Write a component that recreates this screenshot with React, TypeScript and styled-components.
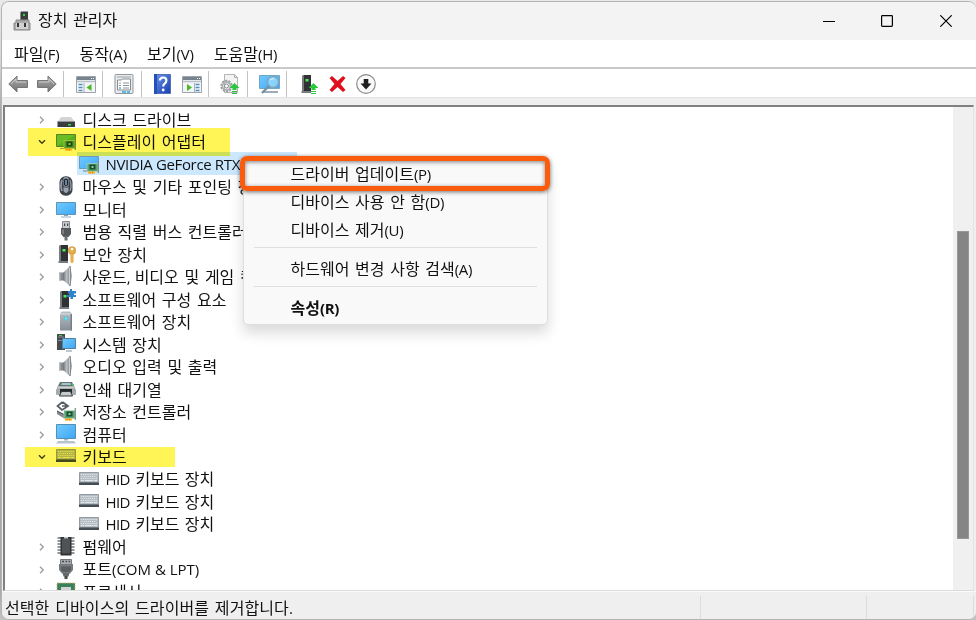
import React from 'react';
import styled, { createGlobalStyle } from 'styled-components';

const GlobalStyle = createGlobalStyle`
  html, body { margin: 0; padding: 0; background: #dedede; overflow: hidden; }
  * { box-sizing: border-box; }
  svg { display: block; flex: none; }
`;

/* ---------- window frame ---------- */

const Desktop = styled.div`
  width: 976px;
  height: 620px;
  padding: 1px 0 0 1px;
  background: linear-gradient(#e9e9e9 0, #d6d6d6 60px, #a8a8a8 110px, #a8a8a8 590px, #c4c4c4);
  overflow: hidden;
`;

const Window = styled.div`
  position: relative;
  width: 975px;
  height: 619px;
  display: flex;
  flex-direction: column;
  border: 1px solid #b4b4b4;
  border-right: 0;
  border-radius: 8px;
  background: #efefef;
  overflow: hidden;
  color: #111;
  font-family: 'Noto Sans CJK KR', sans-serif;
  font-size: 16px;
  line-height: 22px;
`;

const TitleBar = styled.header`
  flex: none;
  height: 38px;
  display: flex;
  align-items: center;
  padding: 0 1px 0 11px;
  background: #f3f3f3;
`;

const Title = styled.div`
  flex: 1;
  padding-left: 7px;
  margin-top: -4px;
`;

const CaptionButton = styled.button`
  width: 58.5px;
  height: 38px;
  padding: 0;
  border: 0;
  display: grid;
  place-items: center;
  background: transparent;
`;

const CaptionButtons = styled.div`
  display: flex;
`;

const MenuBar = styled.nav`
  flex: none;
  height: 27px;
  display: flex;
  align-items: center;
  padding: 0 0 0 12px;
  gap: 20px;
  background: #fff;
`;

const Toolbar = styled.div`
  flex: none;
  height: 31px;
  display: flex;
  align-items: center;
  padding: 2px 0 0 6px;
  background: #fff;
  border-top: 2px solid #c9c9c9;
  border-bottom: 1px solid #e3e3e3;
`;

const Tool = styled.span<{ $gap?: number }>`
  margin-left: ${(p) => p.$gap ?? 0}px;
`;

const ToolDivider = styled.i<{ $gap: number }>`
  width: 1px;
  height: 26px;
  margin-left: ${(p) => p.$gap}px;
  background: #c3c3c3;
`;

const Client = styled.main`
  flex: none;
  height: 486px;
  margin: 7px 2px 0 1px;
  display: flex;
  border-top: 2px solid #808080;
  border-left: 2px solid #808080;
  border-bottom: 1px solid #dcdcdc;
  border-right: 1px solid #e3e3e3;
  background: #fff;
  overflow: hidden;
`;

const Tree = styled.ul`
  flex: 1;
  margin: 0;
  padding: 0.4px 0 0;
  list-style: none;
  overflow: hidden;
`;

const ScrollTrack = styled.div`
  width: 20px;
  padding: 124px 4px 0;
  background: #f0f0f0;
`;

const ScrollThumb = styled.div`
  height: 308px;
  background: #858585;
  border: 1px solid #979797;
`;

const StatusBar = styled.footer`
  flex: 1;
  display: flex;
  align-items: stretch;
  padding-top: 4px;
  border-top: 1px solid #fafafa;
  background: #efefef;
`;

const StatusCell = styled.div<{ $width: number }>`
  width: ${(p) => p.$width}px;
  padding-left: 3px;
  border-right: 1px solid #dcdcdc;
  letter-spacing: 0.09px;
  white-space: nowrap;
`;

/* ---------- tree ---------- */

const Row = styled.li`
  height: 22.53px;
  display: flex;
  align-items: center;
  white-space: nowrap;
`;

const Caret = styled.span`
  width: 12px;
  margin-left: 31px;
  padding-top: 2px;
  display: grid;
  place-items: center;
`;

const IconSlot = styled.span`
  margin-left: 8px;
`;

const Caption = styled.span`
  margin-left: 6.5px;
`;

const Leaf = styled.div<{ $selected?: boolean }>`
  height: 22.5px;
  width: ${(p) => (p.$selected ? '220px' : 'auto')};
  margin-left: 72px;
  padding-left: 2px;
  display: flex;
  align-items: center;
  letter-spacing: -0.1px;
  background: ${(p) => (p.$selected ? '#cce8ff' : 'transparent')};
`;

const Marker = styled.div<{ $x: number; $y: number; $w: number; $h: number }>`
  position: absolute;
  left: ${(p) => p.$x}px;
  top: ${(p) => p.$y}px;
  width: ${(p) => p.$w}px;
  height: ${(p) => p.$h}px;
  background: #fff557;
  mix-blend-mode: multiply;
`;

/* ---------- context menu ---------- */

const Popup = styled.div`
  position: absolute;
  left: 241px;
  top: 154px;
  width: 305px;
  height: 169px;
  padding: 3px 10px;
  border: 1px solid #dedede;
  border-radius: 5px;
  background: #f9f9f9;
  box-shadow: 0 8px 14px rgba(0, 0, 0, 0.15);
`;

const PopupItem = styled.div<{ $bold?: boolean }>`
  height: 28px;
  display: flex;
  align-items: center;
  padding: 0 0 2px 36.5px;
  font-weight: ${(p) => (p.$bold ? 700 : 400)};
  white-space: nowrap;
`;

const PopupRule = styled.div`
  height: 1px;
  margin: 3px 0 7px;
  background: #dfdfdf;
`;

const Callout = styled.div`
  position: absolute;
  left: 238px;
  top: 154px;
  width: 310px;
  height: 35px;
  border: 5px solid #fa5b0c;
  border-radius: 7px;
  box-shadow: 0 1px 4px rgba(0, 0, 0, 0.55), inset 0 1px 4px rgba(0, 0, 0, 0.5);
`;

/* ---------- text ---------- */

const Latin = styled.span<{ $size: number; $tight: number }>`
  font-family: 'Open Sans', sans-serif;
  font-size: ${(p) => p.$size}px;
  letter-spacing: ${(p) => p.$tight}px;
  white-space: pre;
`;

const Hangul = styled.span`
  white-space: pre;
  word-spacing: 2.1px;
`;

function Text({ children, size = 15, tight = -0.35 }: { children: string; size?: number; tight?: number }) {
  const runs = children.split(/([!-~]+(?: [!-~]+)*)/).filter(Boolean);
  return (
    <span>
      {runs.map((r, i) =>
        /[!-~]/.test(r) ? <Latin key={i} $size={size} $tight={tight}>{r}</Latin> : <Hangul key={i}>{r}</Hangul>
      )}
    </span>
  );
}

/* ---------- icons ---------- */

const Svg = ({ w = 20, h = 20, children }: { w?: number; h?: number; children: React.ReactNode }) => (
  <svg width={w} height={h} viewBox={`0 0 ${w} ${h}`} fill="none">{children}</svg>
);

const HiddenDefs = styled.svg`
  position: absolute;
`;

const Gradients = () => (
  <HiddenDefs width="0" height="0">
    <defs>
      <linearGradient id="screen" x1="0" y1="0" x2="1" y2="1">
        <stop offset="0" stopColor="#6fcbff" /><stop offset=".5" stopColor="#58b9fa" /><stop offset="1" stopColor="#3fa6f5" />
      </linearGradient>
      <linearGradient id="steel" x1="0" y1="0" x2="1" y2="0">
        <stop offset="0" stopColor="#6b7277" /><stop offset=".5" stopColor="#b9bec2" /><stop offset="1" stopColor="#858c91" />
      </linearGradient>
      <linearGradient id="silver" x1="0" y1="0" x2="0" y2="1">
        <stop offset="0" stopColor="#b9c0c6" /><stop offset="1" stopColor="#868e96" />
      </linearGradient>
      <linearGradient id="arrow" x1="0" y1="0" x2="0" y2="1">
        <stop offset="0" stopColor="#b0b0b0" /><stop offset="1" stopColor="#6f6f6f" />
      </linearGradient>
      <linearGradient id="help" x1="0" y1="0" x2="1" y2="1">
        <stop offset="0" stopColor="#6d94ee" /><stop offset="1" stopColor="#153fac" />
      </linearGradient>
    </defs>
  </HiddenDefs>
);

const Card = () => (
  <>
    <path d="M8 9.500h11v8H8z" fill="#55a573" stroke="#c5dccb" strokeWidth=".6" />
    <path d="M19.300 7v12" stroke="#7f8b83" strokeWidth="1.200" />
    <path d="M10.500 10.500h6v5h-6z" fill="#1b4f34" /><path d="M12.500 12h2v2h-2z" fill="#8fd09a" />
    <path d="M9 17.500h7v2H9z" fill="#ffae19" /><path d="M11 17.500v2m2.500-2v2" stroke="#e57d0a" strokeWidth=".8" />
  </>
);

const Tower = () => (
  <>
    <path d="M3 2l2-1h7v17H3z" fill="#303236" /><path d="M3 2l2-1v16l-2 1z" fill="#777b80" />
    <path d="M6.500 5h3v2.500h-3z" fill="#4aef50" /><path d="M2.500 17h9.500v2H2.500z" fill="#777c81" />
  </>
);

const GreenUp = () => <path d="M14.500 9l5 5h-3v2h-4v-2h-3zM12 17h5v1h-5zm0 2h5v1h-5z" fill="#2bc73d" />;

const icons: Record<string, React.ReactNode> = {
  disk: <Svg><path d="M5 8h10l4 5H1.500z" fill="#d2d4d5" /><path d="M1.500 12.500h17.500v5.500H1.500z" fill="#3a3d40" /><path d="M1.500 12.500h17.500" stroke="#909497" /><path d="M12 15h3v1.500h-3z" fill="#35df43" /></Svg>,
  display: <Svg><path d="M.5 3.500h19v12H.5z" fill="#54b75c" stroke="#5b8360" /><path d="M1 15V4h18z" fill="#7bcf72" fillOpacity=".55" /><path d="M4 17.500h5" stroke="#9bac9c" /><Card /></Svg>,
  gpu: <Svg><path d="M.5 2.500h19v12H.5z" fill="url(#screen)" stroke="#6d9bb8" /><path d="M4 17h5" stroke="#8ba2b3" strokeWidth="1.500" /><Card /></Svg>,
  mouse: <Svg><rect x="3.500" y=".2" width="13" height="19.600" rx="6" fill="#3d424b" /><path d="M6 4q-2 6 0 11" stroke="#98a1ac" strokeWidth="1.600" /><path d="M14 4q2 6 0 11" stroke="#8c95a0" strokeWidth="1.300" /><path d="M7.500 2q2.500-2 5 0v13q-2.500 4-5 0z" fill="#9ba4b0" /><path d="M7 10.500q3 1.500 6 0" stroke="#454b54" /><rect x="8" y="2.500" width="4" height="7.500" rx="1.800" fill="#20262e" /><path d="M10 4v5" stroke="#8fc9ee" strokeWidth="1.200" /></Svg>,
  monitor: <Svg><path d="M.5 3.500h19v12H.5z" fill="url(#screen)" stroke="#5e94b8" /><path d="M8 16h4v1H8z" fill="#90a4b4" /><path d="M5 18h10" stroke="#8fb2c9" strokeWidth="1.200" /></Svg>,
  usb: <Svg><path d="M6.500.500h7v8h-7z" fill="#c9cbce" stroke="#83868a" /><path d="M8 2.500h1.200v2.500H8zm3 0h1.200v2.500H11z" fill="#444" /><path d="M5 7h10v6l-2.500 3h-5L5 13z" fill="#55585d" /><path d="M7 8.500v4.500" stroke="#a2a4a8" /><path d="M8.500 15h3v4.500h-3z" fill="#6c6f73" /></Svg>,
  security: <Svg><Tower /><circle cx="16" cy="6.500" r="3.900" fill="#e4ae4b" stroke="#b98a36" strokeWidth=".5" /><circle cx="16" cy="5" r="1.300" fill="#fff" /><path d="M14.500 9.500h3v8l-1.500 2-1.500-2z" fill="#d99f38" /><path d="M16 10v8" stroke="#f6d081" strokeWidth=".8" /></Svg>,
  speaker: <Svg><path d="M3 6.500h5v8H3z" fill="#858b90" /><path d="M3 6.500h1.500v8H3z" fill="#b7bbbe" /><path d="M7 7l7-7v20l-7-6z" fill="url(#steel)" /><path d="M14 0q2.500 10 0 20z" fill="#9ba0a4" stroke="#777d81" strokeWidth=".8" /><path d="M13.500 1.500v17" stroke="#cdd1d4" /></Svg>,
  component: <Svg><g transform="translate(1 1)"><Tower /></g><path d="M12 2h2V0h2v2h4v2.500h-2V6h2v2h-3v2h-2.500V8H11V6h2V4.500h-1z" fill="#2f83c9" /></Svg>,
  software: <Svg><path d="M4 2.500L6 .5h8l2 2v17H4z" fill="url(#silver)" /><path d="M4 3h12" stroke="#dce0e3" /><path d="M14.500 3v16.500H16V3z" fill="#757f88" /><circle cx="10" cy="7.500" r="2.200" fill="#6fb9c7" /><circle cx="10" cy="7.500" r="1.200" fill="#4df0ff" /></Svg>,
  system: <Svg><path d="M1 0h8v16H1z" fill="#464b50" /><path d="M2 3h6M2 6.500h5" stroke="#858b90" /><path d="M3 1h3v1H3z" fill="#46d04e" /><path d="M6.500 4.500h13v10h-13z" fill="url(#screen)" stroke="#50809f" /><path d="M10 17h6" stroke="#a7b6c2" strokeWidth="1.500" /></Svg>,
  printer: <Svg><path d="M4 3h12l3 6H1z" fill="#687174" /><path d="M6 4h8.500l.5 2H5z" fill="#9ec7c9" /><path d="M2 7h16l2 4v4q0 1-1 1H1q-1 0-1-1v-4z" fill="#a5aaad" /><path d="M1.500 8.500h17" stroke="#cbd0d2" strokeWidth="1.500" /><path d="M4 10h12v4H4z" fill="#25292c" /><path d="M5.500 12.500h9l2 4.500h-13z" fill="#c8cbcd" stroke="#363b3e" /><path d="M16 5h2v1.500h-2z" fill="#3cd654" /></Svg>,
  storage: <Svg><path d="M6.500 1l5.500 4-3 2M6.500 1L1.500 5 6 9l4-2.500M6 5h4" stroke="#555b61" strokeWidth="1.700" /><path d="M1 10l8 4v4l-8-5z" fill="#858b8f" /><path d="M1 10l8 4" stroke="#3f4447" /><Card /></Svg>,
  computer: <Svg><path d="M.5.500h19v14H.5z" fill="url(#screen)" stroke="#568fb4" /><path d="M8 15h4v1.500H8z" fill="#a6b5c1" /><path d="M2 17h16l2 2.500H0z" fill="#b7c3cd" /></Svg>,
  keyboard: <Svg><path d="M.5 3.500h19v10H.5z" fill="#b4bcc4" stroke="#939ca5" /><path d="M0 13.500h20V16H0z" fill="#444c54" /><path d="M2 5.500h16M2.500 7.500h15M2 9.500h16" stroke="#e5e9ec" strokeDasharray="1.200 .9" /><path d="M2 11.500h3m1 0h8m1 0h3" stroke="#e5e9ec" /></Svg>,
  firmware: <Svg><path d="M1.500 2h17M1.500 5h17M1.500 8h17M1.500 11h17M1.500 14h17M1.500 17h17" stroke="#707376" strokeWidth="1.700" /><path d="M4.500 1h11v18.500h-11z" fill="#303336" /><path d="M6 2.500h8v15H6z" fill="#505356" /><path d="M8 1h4v1.500H8z" fill="#c2c5c8" /></Svg>,
  port: <Svg><path d="M4.500.500h11v5h-11z" fill="#aaadb0" stroke="#74777a" /><path d="M6 2.500h2m1.500 0h1.500m1.500 0h1.500" stroke="#42464a" strokeWidth="1.300" /><path d="M3 5h14v6l-3 3.500H6L3 11z" fill="#777b7f" /><path d="M5 7.500h10v4L13 13H7l-2-1.500z" fill="#5a5f63" /><path d="M6.500 14h7l-1 3.500h-5z" fill="#65696d" /><path d="M8.500 17h3v3h-3z" fill="#45494c" /></Svg>,
  processor: <Svg><path d="M1 2h18v17H1z" fill="#3a8159" stroke="#cfb67b" strokeDasharray="1.500 1" /><path d="M5 6h10v10H5z" fill="#d1d4d2" /></Svg>,
};

const BackArrow = () => <Svg><path d="M.8 10L9 2v4.500h10.500v7H9V18z" fill="url(#arrow)" stroke="#777" /><path d="M3 10l5-5v3h10" stroke="#c9c9c9" /></Svg>;
const ForwardArrow = () => <Svg><path d="M19.200 10L11 2v4.500H.5v7H11V18z" fill="url(#arrow)" stroke="#777" /><path d="M17 10l-5-5v3H2" stroke="#c9c9c9" /></Svg>;

const Pane = ({ flip }: { flip?: boolean }) => (
  <Svg>
    <path d="M.5 2.500h19v16H.5z" fill="#f3f5f7" stroke="#9da4ac" />
    <path d="M1 3h18v3H1z" fill="#77828f" /><path d="M1 7.500h18" stroke="#b7bfc7" strokeWidth="1.500" />
    <path d="M15 4.500h1m1 0h1" stroke="#fff" />
    <g transform={flip ? 'translate(11 0)' : undefined}><path d="M2.500 10.500h4M2.500 13.500h4M2.500 16.500h4" stroke="#4f90bf" strokeWidth="1.500" /></g>
    <path d={flip ? 'M12.500 9v9' : 'M8 9v9'} stroke="#aab1b8" />
    <path d={flip ? 'M5 10l5 3.500L5 17z' : 'M15.500 10l-5 3.500 5 3.500z'} fill="#4bb729" />
  </Svg>
);

const Properties = () => <Svg><rect x="1" y=".5" width="18" height="19" rx="1" fill="#e9ebed" stroke="#91979d" /><path d="M3 2h14v2H3z" fill="#c2c7cc" /><path d="M3.500 6h4l1-1h8v11h-13z" fill="#fff" stroke="#858c94" /><path d="M5 9h2m2 0h6M5 11.500h2m2 0h6M5 14h2m2 0h6" stroke="#8d969f" /><path d="M5 14h2" stroke="#45a9e0" /><path d="M8 18h4m1 0h3" stroke="#28aae5" strokeWidth="1.500" /></Svg>;
const Help = () => <Svg w={17}><path d="M.5.5h16v19H.5z" fill="url(#help)" stroke="#5370b9" /><path d="M0 0h3v20H0z" fill="#2450b9" /><path d="M6 6.500q0-3 3.200-3t3.200 3q0 2-2 3.300-1.200.8-1.200 2.700" stroke="#fff" strokeWidth="2.200" /><circle cx="9.200" cy="16" r="1.400" fill="#fff" /></Svg>;
const UpdateFile = () => <Svg><path d="M4.500.500h10l3 3v15h-13z" fill="#f3f3f3" stroke="#b3b3b3" /><path d="M14.500.5v3h3" stroke="#aaa" /><circle cx="6.500" cy="12" r="5" stroke="#949a9e" strokeWidth="2.400" strokeDasharray="2 1.100" /><circle cx="6.500" cy="12" r="4" stroke="#aeb2b5" strokeWidth="1.800" /><circle cx="6.500" cy="12" r="2" fill="#fff" stroke="#858b90" /><GreenUp /></Svg>;
const Scan = () => <Svg w={21}><path d="M.5 1.500h20v13H.5z" fill="url(#screen)" stroke="#72a7c4" /><path d="M3 18h16" stroke="#9cacb8" strokeWidth="2" /><circle cx="14" cy="8" r="5.500" fill="#9bdcff" fillOpacity=".75" stroke="#82a3b7" strokeWidth="1.400" /><path d="M10 12l-7 7" stroke="#78909f" strokeWidth="2.400" /><path d="M11 6q2-2 4-1" stroke="#ddf4ff" /></Svg>;
const Driver = () => <Svg><g transform="translate(-1 0)"><Tower /></g><g transform="translate(-1 0)"><GreenUp /></g></Svg>;
const Remove = () => <Svg w={17} h={18}><path d="M3 1l5.500 5L14 1l2.500 2-5 6 5 6-2.500 2-5.500-5L3 17 .5 15l5-6-5-6z" fill="#df101b" /></Svg>;
const Disable = () => <Svg><circle cx="10" cy="10" r="9.300" fill="#fafafa" stroke="#8a8a8a" strokeWidth="1.200" /><path d="M7.700 5h4.600v4.500H15.500L10 15.500 4.500 9.500h3.200z" fill="#1e1e1e" /></Svg>;

const AppIcon = () => <Svg w={18} h={20}><path d="M8 .5h7v9H8z" fill="#3a3d40" /><path d="M7 1.500l1-1v9H7z" fill="#888" /><path d="M10 3h2v2h-2z" fill="#39d743" /><path d="M3 9h13v3h1v7H1v-7h2z" fill="#aaa" stroke="#898989" /><path d="M3 12h12v6H3z" fill="#d2d2d2" /><path d="M4 12h2v4H4zm7 0h2v4h-2z" fill="#333" /></Svg>;

const Closed = () => <svg width="6" height="8" viewBox="0 0 6 8"><path d="M1 .7L4.300 4 1 7.300" fill="none" stroke="#9b9b9b" strokeWidth="1.300" /></svg>;
const Open = () => <svg width="8" height="6" viewBox="0 0 8 6"><path d="M1 1.200L4 4.200l3-3" fill="none" stroke="#404040" strokeWidth="1.400" /></svg>;

/* ---------- data ---------- */

type Node = { icon: string; text: string; open?: boolean; leaf?: boolean; selected?: boolean; tight?: number };

const nodes: Node[] = [
  { icon: 'disk', text: '디스크 드라이브' },
  { icon: 'display', text: '디스플레이 어댑터', open: true },
  { icon: 'gpu', text: 'NVIDIA GeForce RTX', leaf: true, selected: true },
  { icon: 'mouse', text: '마우스 및 기타 포인팅 장치' },
  { icon: 'monitor', text: '모니터' },
  { icon: 'usb', text: '범용 직렬 버스 컨트롤러' },
  { icon: 'security', text: '보안 장치' },
  { icon: 'speaker', text: '사운드, 비디오 및 게임 컨트롤러', tight: -1.6 },
  { icon: 'component', text: '소프트웨어 구성 요소' },
  { icon: 'software', text: '소프트웨어 장치' },
  { icon: 'system', text: '시스템 장치' },
  { icon: 'speaker', text: '오디오 입력 및 출력' },
  { icon: 'printer', text: '인쇄 대기열' },
  { icon: 'storage', text: '저장소 컨트롤러' },
  { icon: 'computer', text: '컴퓨터' },
  { icon: 'keyboard', text: '키보드', open: true },
  { icon: 'keyboard', text: 'HID 키보드 장치', leaf: true, tight: -0.6 },
  { icon: 'keyboard', text: 'HID 키보드 장치', leaf: true, tight: -0.6 },
  { icon: 'keyboard', text: 'HID 키보드 장치', leaf: true, tight: -0.6 },
  { icon: 'firmware', text: '펌웨어' },
  { icon: 'port', text: '포트(COM & LPT)', tight: 0 },
  { icon: 'processor', text: '프로세서' },
];

export default function App() {
  return (
    <Desktop>
      <GlobalStyle />
      <Gradients />
      <Window>
        <TitleBar>
          <AppIcon />
          <Title><Text>장치 관리자</Text></Title>
          <CaptionButtons>
            <CaptionButton aria-label="최소화"><Svg w={12} h={12}><path d="M0 6.500h12" stroke="#000" /></Svg></CaptionButton>
            <CaptionButton aria-label="최대화"><Svg w={12} h={12}><rect x=".6" y=".6" width="10.800" height="10.800" rx=".8" stroke="#000" strokeWidth="1.200" /></Svg></CaptionButton>
            <CaptionButton aria-label="닫기"><Svg w={12} h={12}><path d="M.3.3l11.400 11.400m0-11.400L.3 11.700" stroke="#000" strokeWidth="1.200" /></Svg></CaptionButton>
          </CaptionButtons>
        </TitleBar>
        <MenuBar>
          {['파일(F)', '동작(A)', '보기(V)', '도움말(H)'].map((m) => <Text key={m} size={15} tight={-0.15}>{m}</Text>)}
        </MenuBar>
        <Toolbar>
          <Tool><BackArrow /></Tool>
          <Tool $gap={9}><ForwardArrow /></Tool>
          <ToolDivider $gap={6} />
          <Tool $gap={12}><Pane /></Tool>
          <ToolDivider $gap={6} />
          <Tool $gap={11}><Properties /></Tool>
          <ToolDivider $gap={7} />
          <Tool $gap={12}><Help /></Tool>
          <Tool $gap={11}><Pane flip /></Tool>
          <ToolDivider $gap={6} />
          <Tool $gap={11}><UpdateFile /></Tool>
          <ToolDivider $gap={7} />
          <Tool $gap={11}><Scan /></Tool>
          <ToolDivider $gap={6} />
          <Tool $gap={13}><Driver /></Tool>
          <Tool $gap={9}><Remove /></Tool>
          <Tool $gap={10}><Disable /></Tool>
        </Toolbar>
        <Client>
          <Tree>
            {nodes.map((n, i) => (
              <Row key={i}>
                {n.leaf ? (
                  <Leaf $selected={n.selected}>
                    {icons[n.icon]}
                    <Caption><Text tight={n.tight}>{n.text}</Text></Caption>
                  </Leaf>
                ) : (
                  <>
                    <Caret>{n.open ? <Open /> : <Closed />}</Caret>
                    <IconSlot>{icons[n.icon]}</IconSlot>
                    <Caption><Text tight={n.tight}>{n.text}</Text></Caption>
                  </>
                )}
              </Row>
            ))}
          </Tree>
          <ScrollTrack><ScrollThumb /></ScrollTrack>
        </Client>
        <StatusBar>
          <StatusCell $width={699}><Text>선택한 디바이스의 드라이버를 제거합니다.</Text></StatusCell>
          <StatusCell $width={166} />
          <StatusCell $width={107} />
        </StatusBar>
        <Marker $x={26} $y={126} $w={202} $h={28} />
        <Marker $x={23} $y={445} $w={150} $h={20} />
        <Popup>
          <PopupItem><Text>드라이버 업데이트(P)</Text></PopupItem>
          <PopupItem><Text>디바이스 사용 안 함(D)</Text></PopupItem>
          <PopupItem><Text>디바이스 제거(U)</Text></PopupItem>
          <PopupRule />
          <PopupItem><Text>하드웨어 변경 사항 검색(A)</Text></PopupItem>
          <PopupRule />
          <PopupItem $bold><Text>속성(R)</Text></PopupItem>
        </Popup>
        <Callout />
      </Window>
    </Desktop>
  );
}
